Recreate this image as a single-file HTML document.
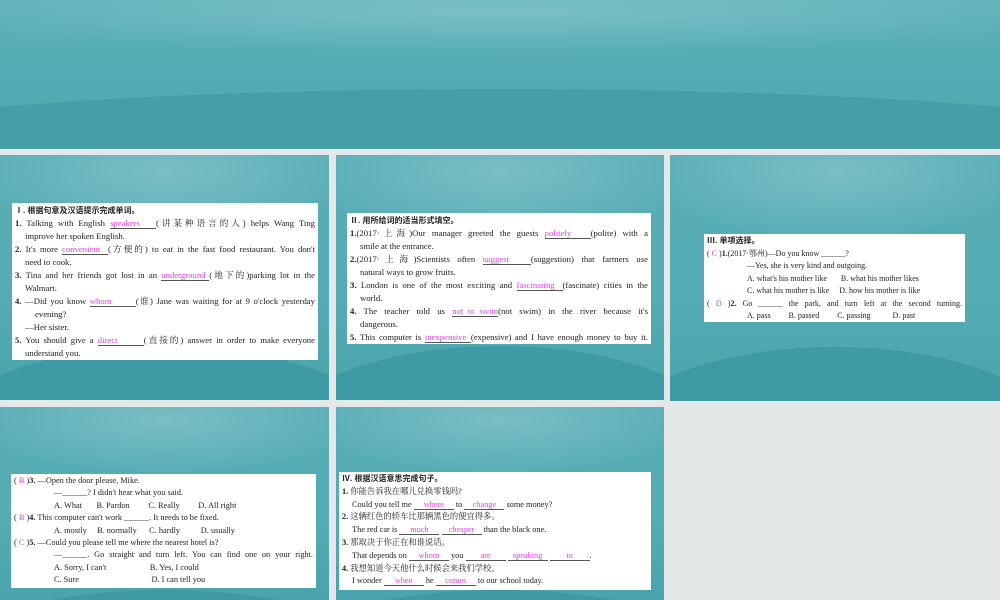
<!DOCTYPE html>
<html><head><meta charset="utf-8"><style>
*{margin:0;padding:0;box-sizing:border-box}
html,body{width:1000px;height:600px;overflow:hidden}
body{background:#e4e8e8;position:relative;font-family:"Liberation Serif","Noto Serif CJK SC",serif;}
.s{position:absolute;overflow:hidden;background:linear-gradient(180deg,#5aaeb6 0%,#54abb3 60%,#4aa3ac 100%)}
.s:before{content:"";position:absolute;left:-10%;right:-10%;top:0;height:35%;background:radial-gradient(ellipse at 50% 20%,rgba(160,210,215,.45),rgba(160,210,215,0) 70%)}
.s .w{position:absolute;left:-20%;width:140%;height:80%;top:78%;border-radius:50%;background:#3e9aa5}
.b{position:absolute;background:#fff;color:#222;font-size:8.7px;line-height:12.8px;padding:1px 3px}
.b p{white-space:nowrap}
.b p.j{white-space:normal;text-align:justify;text-align-last:justify;text-justify:inter-word}
.m{color:#e040e0;display:inline-block;border-bottom:0.8px solid #555;text-align:center;line-height:9px}
.i{padding-left:10px}
.h{font-family:"Liberation Sans","Noto Sans CJK SC",sans-serif;font-size:8px;font-weight:bold}
.p{color:#e040e0}
</style></head><body>
<div class="s" style="left:0;top:0;width:1000px;height:149px;background:linear-gradient(180deg,#5eb2b9,#4da5ae)"><div class="w" style="top:60%;background:#449fa9"></div></div>

<div class="s" style="left:0;top:155px;width:329px;height:245px"><div class="w"></div>
<div class="b" style="left:12px;top:48px;width:306px;height:157px;line-height:13px">
<p class="h">Ⅰ. 根据句意及汉语提示完成单词。</p>
<p class="j"><b>1.</b> Talking with English <span class="m" style="width:46px">speakers</span>(讲某种语言的人) helps Wang Ting</p>
<p class="i">improve her spoken English.</p>
<p class="j"><b>2.</b> It's more <span class="m" style="width:46px">convenient</span>(方便的) to eat in the fast food restaurant. You don't</p>
<p class="i">need to cook.</p>
<p class="j"><b>3.</b> Tina and her friends got lost in an <span class="m" style="width:48px">underground</span>(地下的)parking lot in the</p>
<p class="i">Walmart.</p>
<p class="j"><b>4.</b> —Did you know <span class="m" style="width:46px">whom</span>(谁) Jane was waiting for at 9 o'clock yesterday</p>
<p style="padding-left:20px">evening?</p>
<p class="i">—Her sister.</p>
<p class="j"><b>5.</b> You should give a <span class="m" style="width:46px">direct</span>(直接的) answer in order to make everyone</p>
<p class="i">understand you.</p>
</div></div>

<div class="s" style="left:336px;top:155px;width:328px;height:245px"><div class="w"></div>
<div class="b" style="left:11px;top:58px;width:304px;height:131px;line-height:13px">
<p class="h">Ⅱ. 用所给词的适当形式填空。</p>
<p class="j"><b>1.</b>(2017·上海)Our manager greeted the guests <span class="m" style="width:46px">politely</span>(polite) with a</p>
<p class="i">smile at the entrance.</p>
<p class="j"><b>2.</b>(2017·上海)Scientists often <span class="m" style="width:48px">suggest</span>(suggestion) that farmers use</p>
<p class="i">natural ways to grow fruits.</p>
<p class="j"><b>3.</b> London is one of the most exciting and <span class="m" style="width:46px">fascinating</span>(fascinate) cities in the</p>
<p class="i">world.</p>
<p class="j"><b>4.</b> The teacher told us <span class="m" style="width:46px">not to swim</span>(not swim) in the river because it's</p>
<p class="i">dangerous.</p>
<p class="j"><b>5.</b> This computer is <span class="m" style="width:46px">inexpensive</span>(expensive) and I have enough money to buy it.</p>
</div></div>

<div class="s" style="left:670px;top:155px;width:330px;height:246px"><div class="w"></div>
<div class="b" style="left:34px;top:79px;width:261px;height:88px;line-height:12.5px;font-size:8px">
<p class="h">Ⅲ. 单项选择。</p>
<p>( <span class="p">C</span> )<b>1.</b>(2017·鄂州)—Do you know ______?</p>
<p style="padding-left:40px">—Yes, she is very kind and outgoing.</p>
<p style="padding-left:40px">A. what's his mother like &nbsp; &nbsp; &nbsp; B. what his mother likes</p>
<p style="padding-left:40px">C. what his mother is like &nbsp; &nbsp; D. how his mother is like</p>
<p class="j">( <span class="p">D</span> )<b>2.</b> Go ______ the park, and turn left at the second turning.</p>
<p style="padding-left:40px">A. pass &nbsp; &nbsp; &nbsp; &nbsp; B. passed &nbsp; &nbsp; &nbsp; &nbsp; C. passing &nbsp; &nbsp; &nbsp; &nbsp; &nbsp; D. past</p>
</div></div>

<div class="s" style="left:0;top:407px;width:329px;height:193px"><div class="w" style="top:95%"></div>
<div class="b" style="left:11px;top:67px;width:305px;height:114px;line-height:12.4px;font-size:8.3px">
<p>( <span class="p">B</span> )<b>3.</b> —Open the door please, Mike.</p>
<p style="padding-left:40px">—______? I didn't hear what you said.</p>
<p style="padding-left:40px">A. What &nbsp; &nbsp; &nbsp; B. Pardon &nbsp; &nbsp; &nbsp; &nbsp; C. Really &nbsp; &nbsp; &nbsp; &nbsp; D. All right</p>
<p>( <span class="p">B</span> )<b>4.</b> This computer can't work ______. It needs to be fixed.</p>
<p style="padding-left:40px">A. mostly &nbsp; &nbsp; B. normally &nbsp; &nbsp; &nbsp;C. hardly &nbsp; &nbsp; &nbsp; &nbsp; &nbsp;D. usually</p>
<p>( <span class="p">C</span> )<b>5.</b> —Could you please tell me where the nearest hotel is?</p>
<p class="j" style="padding-left:40px">—______. Go straight and turn left. You can find one on your right.</p>
<p style="padding-left:40px">A. Sorry, I can't &nbsp; &nbsp; &nbsp; &nbsp; &nbsp; &nbsp; &nbsp; &nbsp; &nbsp; &nbsp; B. Yes, I could</p>
<p style="padding-left:40px">C. Sure &nbsp; &nbsp; &nbsp; &nbsp; &nbsp; &nbsp; &nbsp; &nbsp; &nbsp; &nbsp; &nbsp; &nbsp; &nbsp; &nbsp; &nbsp; &nbsp; &nbsp; D. I can tell you</p>
</div></div>

<div class="s" style="left:336px;top:407px;width:328px;height:193px"><div class="w" style="top:95%"></div>
<div class="b" style="left:3px;top:65px;width:312px;height:118px;line-height:12.8px;font-size:8.3px">
<p class="h">Ⅳ. 根据汉语意思完成句子。</p>
<p><b>1.</b> 你能告诉我在哪儿兑换零钱吗?</p>
<p class="i">Could you tell me <span class="m" style="width:40px">where</span> to <span class="m" style="width:40px">change</span> some money?</p>
<p><b>2.</b> 这辆红色的轿车比那辆黑色的便宜得多。</p>
<p class="i">The red car is <span class="m" style="width:40px">much</span> <span class="m" style="width:40px">cheaper</span> than the black one.</p>
<p><b>3.</b> 那取决于你正在和谁说话。</p>
<p class="i">That depends on <span class="m" style="width:40px">whom</span> you <span class="m" style="width:40px">are</span> <span class="m" style="width:40px">speaking</span> <span class="m" style="width:40px">to</span>.</p>
<p><b>4.</b> 我想知道今天他什么时候会来我们学校。</p>
<p class="i">I wonder <span class="m" style="width:40px">when</span> he <span class="m" style="width:40px">comes</span> to our school today.</p>
</div></div>
</body></html>
